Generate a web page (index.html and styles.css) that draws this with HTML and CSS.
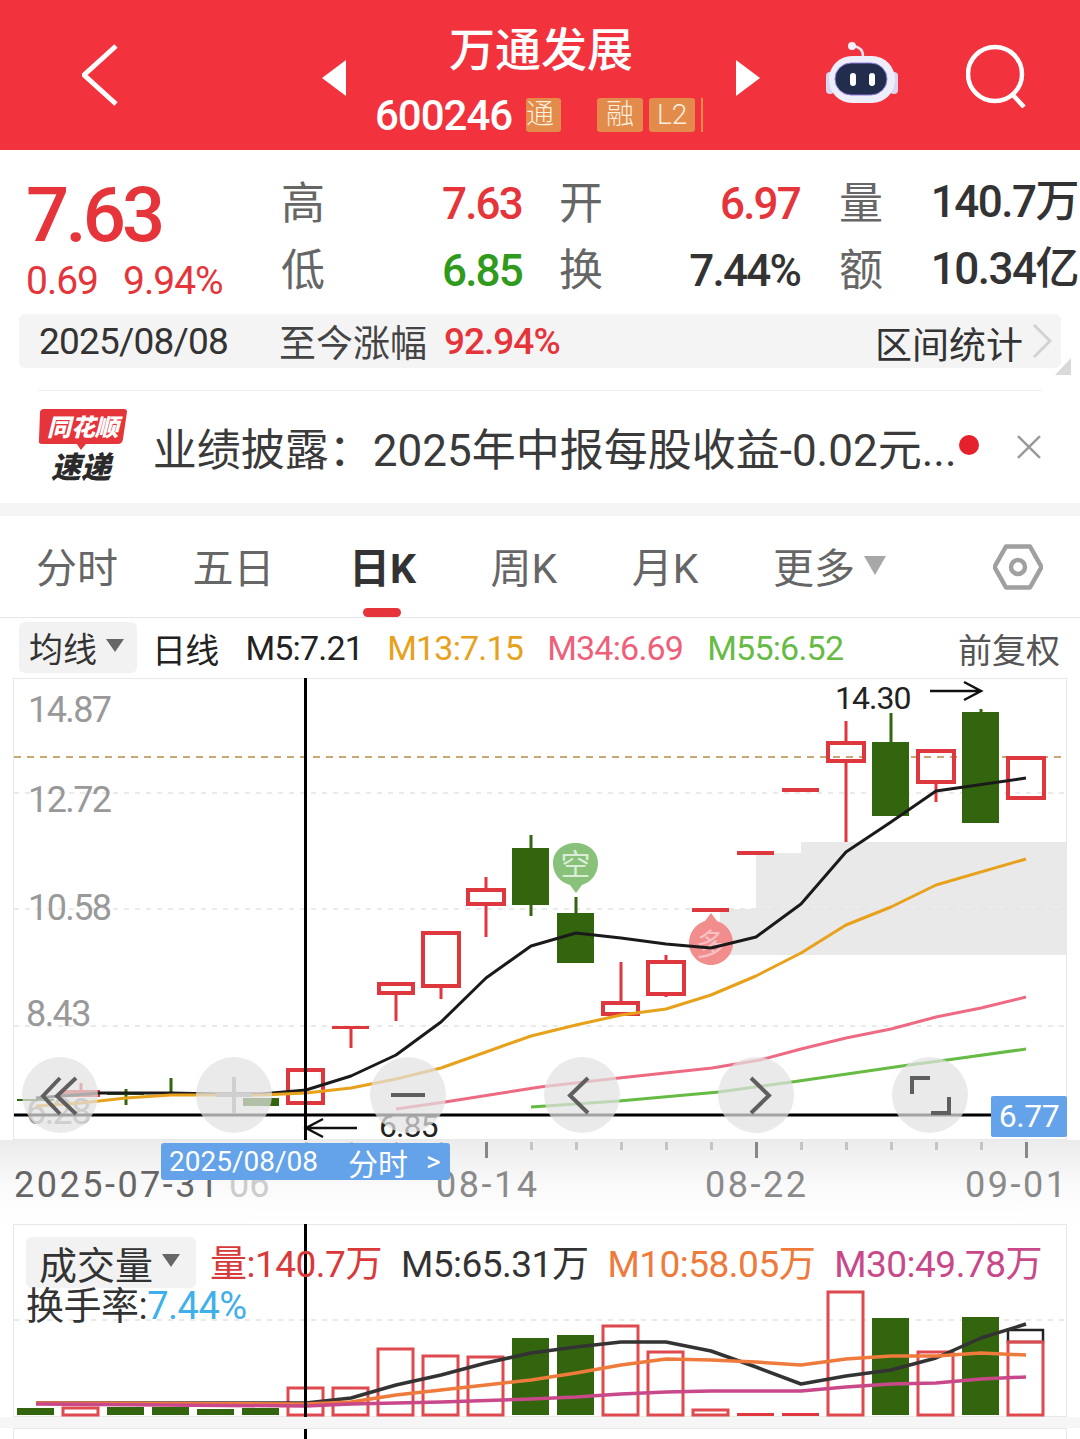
FILE: index.html
```html
<!DOCTYPE html>
<html lang="zh-CN">
<head>
  <meta charset="UTF-8">
  <title>万通发展 600246</title>
  <link rel="stylesheet" href="styles.css">
</head>
<body>
  <header class="topbar">
    <svg class="back" viewBox="0 0 36 62"><path d="M34 2 L2 31 L34 60"/></svg>
    <svg class="tri tri-left" viewBox="0 0 24 36"><path d="M24 0 V36 L0 18 Z"/></svg>
    <div class="stock">
      <div class="stock-name">万通发展</div>
      <div class="stock-sub">
        <span class="stock-code">600246</span>
        <span class="tag tag-cut">通</span>
        <span class="tag tag-rong">融</span>
        <span class="tag">L2</span>
        <span class="tag-sliver"></span>
      </div>
    </div>
    <svg class="tri" viewBox="0 0 24 36"><path d="M0 0 V36 L24 18 Z"/></svg>
    <svg class="robot" viewBox="0 0 72 64">
      <path d="M37 15 C37 9 33 6 28 5" fill="none" stroke="#e6e4f8" stroke-width="2.5"/>
      <circle cx="26" cy="5" r="4" fill="#f1f0fb"/>
      <rect x="0" y="31" width="8" height="22" rx="4" fill="#d9d6f2"/>
      <rect x="64" y="31" width="8" height="22" rx="4" fill="#d9d6f2"/>
      <rect x="3" y="15" width="66" height="47" rx="23" fill="#eeedfa"/>
      <rect x="9" y="22" width="52" height="32" rx="16" fill="#222c4c" stroke="#8d7fe0" stroke-width="1"/>
      <rect x="24" y="32" width="6" height="13" rx="3" fill="#fff"/>
      <rect x="43" y="32" width="6" height="13" rx="3" fill="#fff"/>
    </svg>
    <svg class="search" viewBox="0 0 60 64"><circle cx="29" cy="30" r="27"/><path d="M46 50 L58 63"/></svg>
  </header>

  <section class="quote">
    <div class="quote-main">
      <div class="price">7.63</div>
      <div class="change"><span>0.69</span><span>9.94%</span></div>
    </div>
    <div class="stats">
      <div class="stat-col">
        <span class="stat-label">高</span><span class="stat-val red">7.63</span>
        <span class="stat-label">低</span><span class="stat-val green">6.85</span>
      </div>
      <div class="stat-col">
        <span class="stat-label">开</span><span class="stat-val red">6.97</span>
        <span class="stat-label">换</span><span class="stat-val">7.44%</span>
      </div>
      <div class="stat-col stat-col-last">
        <span class="stat-label">量</span><span class="stat-val">140.7万</span>
        <span class="stat-label">额</span><span class="stat-val">10.34亿</span>
      </div>
    </div>
  </section>

  <div class="range-bar">
    <span class="range-date">2025/08/08</span>
    <span class="range-label">至今涨幅</span>
    <span class="range-pct">92.94%</span>
    <span class="range-link">区间统计</span>
    <svg class="range-arrow" viewBox="0 0 20 36"><path d="M2 2 L18 18 L2 34"/></svg>
    <span class="range-corner"></span>
  </div>

  <div class="news">
    <svg class="news-logo" viewBox="0 0 90 78">
      <path d="M6 1 H86 Q90 1 89 5 L85 32 Q84 36 80 36 H48 L43 42 L39 36 H4 Q0 36 1 32 L2 5 Q2 1 6 1 Z" fill="#e5343a"/>
      <text class="logo-top" x="45" y="28" text-anchor="middle">同花顺</text>
      <text class="logo-bottom" x="43" y="70" text-anchor="middle">速递</text>
    </svg>
    <div class="news-text">业绩披露：2025年中报每股收益-0.02元...</div>
    <span class="news-dot"></span>
    <svg class="news-close" viewBox="0 0 26 26"><path d="M2 2 L24 24 M24 2 L2 24"/></svg>
  </div>

  <div class="band"></div>

  <nav class="tabs">
    <span class="tab">分时</span>
    <span class="tab">五日</span>
    <span class="tab tab-on">日K</span>
    <span class="tab">周K</span>
    <span class="tab">月K</span>
    <span class="tab">更多<i class="tab-caret"></i></span>
    <svg class="gear" viewBox="0 0 50 46"><path d="M1.5 23 L13 2.500 H37 L48.500 23 L37 43.500 H13 Z"/><circle cx="25" cy="23" r="7"/></svg>
  </nav>

  <div class="legend">
    <span class="legend-btn">均线<i class="caret"></i></span>
    <span class="legend-item">日线</span>
    <span class="legend-item legend-m5">M5:7.21</span>
    <span class="legend-item legend-m13">M13:7.15</span>
    <span class="legend-item legend-m34">M34:6.69</span>
    <span class="legend-item legend-m55">M55:6.52</span>
    <span class="legend-right">前复权</span>
  </div>

  <div class="kline">
    <svg class="kline-svg" viewBox="0 678 1080 462">
      <polygon class="zone" points="1066,842 801,842 801,853 756,853 756,909 720,909 720,955 1066,955"/>
      <line class="grid" x1="14" y1="793" x2="1064" y2="793"/>
      <line class="grid" x1="14" y1="909" x2="1064" y2="909"/>
      <line class="grid" x1="14" y1="1026" x2="1064" y2="1026"/>
      <line class="last-close" x1="14" y1="757" x2="1064" y2="757"/>
      <rect class="frame" x="13.500" y="678.500" width="1053" height="461"/>

      <text class="axis-label" x="28" y="722">14.87</text>
      <text class="axis-label" x="28" y="812">12.72</text>
      <text class="axis-label" x="28" y="920">10.58</text>
      <text class="axis-label" x="26" y="1026">8.43</text>
      <text class="axis-label" x="26" y="1124">6.28</text>

      <!-- 绿K -->
      <rect class="dn" x="17" y="1099" width="37" height="2"/>
      <rect class="dn" x="107" y="1093" width="37" height="2"/>
      <line class="dn-w" x1="126" y1="1089" x2="126" y2="1105"/>
      <rect class="dn" x="152" y="1092" width="37" height="2"/>
      <line class="dn-w" x1="171" y1="1078" x2="171" y2="1093"/>
      <rect class="dn" x="197" y="1094" width="37" height="2"/>
      <rect class="dn" x="243" y="1098" width="36" height="8"/>
      <rect class="dn" x="512" y="848" width="37" height="57"/>
      <line class="dn-w" x1="531" y1="835" x2="531" y2="916"/>
      <rect class="dn" x="557" y="913" width="37" height="50"/>
      <line class="dn-w" x1="576" y1="897" x2="576" y2="913"/>
      <rect class="dn" x="872" y="742" width="37" height="74"/>
      <line class="dn-w" x1="891" y1="713" x2="891" y2="742"/>
      <rect class="dn" x="962" y="712" width="37" height="111"/>
      <line class="dn-w" x1="981" y1="709" x2="981" y2="712"/>

      <!-- 红K -->
      <line class="up-w" x1="81" y1="1083" x2="81" y2="1092"/>
      <rect class="up" x="64" y="1092" width="34" height="3"/>
      <rect class="up" x="288" y="1070" width="35" height="33"/>
      <rect class="up-f" x="332" y="1026" width="37" height="3"/>
      <line class="up-w" x1="351" y1="1028" x2="351" y2="1048"/>
      <rect class="up" x="379" y="984" width="34" height="9"/>
      <line class="up-w" x1="396" y1="994" x2="396" y2="1021"/>
      <rect class="up" x="423" y="933" width="36" height="53"/>
      <line class="up-w" x1="441" y1="986" x2="441" y2="999"/>
      <rect class="up" x="468" y="890" width="36" height="14"/>
      <line class="up-w" x1="486" y1="877" x2="486" y2="890"/>
      <line class="up-w" x1="486" y1="904" x2="486" y2="937"/>
      <rect class="up" x="603" y="1003" width="35" height="11"/>
      <line class="up-w" x1="621" y1="962" x2="621" y2="1003"/>
      <rect class="up" x="648" y="962" width="36" height="32"/>
      <line class="up-w" x1="666" y1="955" x2="666" y2="962"/>
      <line class="up-w" x1="666" y1="994" x2="666" y2="997"/>
      <rect class="up-f" x="692" y="908" width="37" height="4"/>
      <rect class="up-f" x="737" y="851" width="37" height="4"/>
      <rect class="up-f" x="782" y="788" width="37" height="4"/>
      <rect class="up" x="828" y="743" width="36" height="18"/>
      <line class="up-w" x1="846" y1="721" x2="846" y2="743"/>
      <line class="up-w" x1="846" y1="761" x2="846" y2="842"/>
      <rect class="up" x="918" y="751" width="36" height="31"/>
      <line class="up-w" x1="936" y1="782" x2="936" y2="802"/>
      <rect class="up" x="1008" y="758" width="36" height="40"/>

      <g class="signal">
        <path d="M576 893 L570 885 C559 882 553 873 553 863 C553 851 563 843 575.500 843 C588 843 598 851 598 863 C598 873 592 882 582 885 Z" fill="#88c27a"/>
        <text class="signal-text" x="575.500" y="875" text-anchor="middle">空</text>
      </g>
      <g class="signal">
        <path d="M711 913 L705 921 C695 924 689 933 689 943 C689 955 699 965 711 965 C723 965 733 955 733 943 C733 933 727 924 717 921 Z" fill="#f28d8e"/>
        <text class="signal-text signal-faint" x="711" y="955" text-anchor="middle">多</text>
      </g>

      <polyline class="ma ma5" points="36,1098 100,1093 171,1093 216,1094 261,1094 306,1090 351,1076 396,1055 441,1022 486,978 531,946 576,933 621,938 666,944 711,948 756,937 801,904 846,852 891,822 936,791 1026,778"/>
      <polyline class="ma ma13" points="36,1106 81,1103 126,1098 171,1095 216,1095 261,1095 306,1093 351,1088 396,1079 441,1068 486,1052 531,1036 576,1025 621,1015 666,1009 711,995 756,976 801,953 846,925 891,907 936,885 1026,859"/>
      <polyline class="ma ma34" points="396,1109 445,1102 540,1087 619,1078 712,1068 760,1060 801,1049 846,1038 891,1029 936,1017 981,1008 1026,997"/>
      <polyline class="ma ma55" points="531,1107 619,1101 719,1092 792,1082 909,1065 947,1060 1026,1049"/>

      <text class="mark-text" x="835" y="709">14.30</text>
      <path class="mark-arrow" d="M930 691 H981 M964 682 L981 691 L964 700"/>
      <text class="mark-text" x="379" y="1137">6.85</text>
      <path class="mark-arrow" d="M357 1128 H306 M323 1119 L306 1128 L323 1137"/>

      <rect class="cross" x="14" y="1113.500" width="977" height="3"/>
      <rect class="cross" x="304" y="678" width="3" height="462"/>
    </svg>

    <div class="chart-tools">
      <span class="tool"><svg viewBox="0 0 76 76"><path d="M38 21 L21 39 L38 57 M54 21 L35 39 L54 57"/></svg></span>
      <span class="tool tool-off"><svg viewBox="0 0 76 76"><path d="M38 20 V56 M20 38 H56"/></svg></span>
      <span class="tool"><svg viewBox="0 0 76 76"><path d="M21 38 H55"/></svg></span>
      <span class="tool"><svg viewBox="0 0 76 76"><path d="M44 21 L26 38.500 L44 56"/></svg></span>
      <span class="tool"><svg viewBox="0 0 76 76"><path d="M33 21 L51 38.500 L33 56"/></svg></span>
      <span class="tool"><svg viewBox="0 0 76 76"><path d="M20 37 V21 H38 M57 40 V56 H39"/></svg></span>
    </div>
    <span class="price-tag">6.77</span>
  </div>

  <div class="axis">
    <div class="ticks">
      <i class="tick"></i><i class="tick"></i><i class="tick"></i><i class="tick"></i><i class="tick tick-long"></i>
      <i class="tick"></i><i class="tick"></i><i class="tick"></i><i class="tick"></i><i class="tick"></i><i class="tick tick-long"></i>
      <i class="tick"></i><i class="tick"></i><i class="tick"></i><i class="tick"></i><i class="tick"></i><i class="tick tick-long"></i>
    </div>
    <div class="dates">
      <span class="date-first">2025-07-31</span>
      <span class="date-fade">06</span>
      <span class="date-a">08-14</span>
      <span class="date-b">08-22</span>
      <span class="date-c">09-01</span>
    </div>
    <div class="date-flag"><span>2025/08/08</span><span class="flag-cn">分时</span><span class="flag-go">&gt;</span></div>
  </div>

  <div class="volume">
    <svg class="volume-svg" viewBox="0 1224 1080 204">
      <rect class="frame" x="13.500" y="1224.500" width="1053" height="192"/>
      <line class="grid" x1="14" y1="1320" x2="1064" y2="1320"/>
      <rect class="dn" x="17" y="1408" width="37" height="7"/>
      <rect class="vol-up" x="63" y="1408" width="35" height="7"/>
      <rect class="dn" x="107" y="1407" width="37" height="8"/>
      <rect class="dn" x="152" y="1407" width="37" height="8"/>
      <rect class="dn" x="197" y="1409" width="37" height="6"/>
      <rect class="dn" x="242" y="1408" width="37" height="7"/>
      <rect class="vol-up" x="288" y="1388" width="35" height="27"/>
      <rect class="vol-up" x="333" y="1388" width="35" height="27"/>
      <rect class="vol-up" x="378" y="1349" width="35" height="66"/>
      <rect class="vol-up" x="423" y="1356" width="35" height="59"/>
      <rect class="vol-up" x="468" y="1357" width="35" height="58"/>
      <rect class="dn" x="512" y="1338" width="37" height="77"/>
      <rect class="dn" x="557" y="1335" width="37" height="80"/>
      <rect class="vol-up" x="603" y="1326" width="35" height="89"/>
      <rect class="vol-up" x="648" y="1352" width="35" height="63"/>
      <rect class="vol-up" x="693" y="1410" width="35" height="5"/>
      <rect class="up-f" x="737" y="1413" width="37" height="3"/>
      <rect class="up-f" x="782" y="1413" width="37" height="3"/>
      <rect class="vol-up" x="828" y="1292" width="35" height="123"/>
      <rect class="dn" x="872" y="1318" width="37" height="97"/>
      <rect class="vol-up" x="918" y="1352" width="35" height="63"/>
      <rect class="dn" x="962" y="1317" width="37" height="98"/>
      <rect class="vol-now" x="1008" y="1330" width="35" height="12"/>
      <rect class="vol-up" x="1008" y="1342" width="35" height="73"/>
      <polyline class="vma vma5" points="36,1403 306,1403 351,1398 396,1385 441,1375 486,1363 531,1353 576,1347 621,1342 666,1342 711,1351 756,1367 801,1384 846,1376 891,1370 936,1358 981,1338 1026,1324"/>
      <polyline class="vma vma10" points="36,1403 306,1404 351,1402 396,1395 441,1390 486,1385 531,1380 576,1373 621,1365 666,1359 711,1360 756,1362 801,1365 846,1359 891,1356 936,1356 981,1353 1026,1355"/>
      <polyline class="vma vma30" points="36,1404 306,1406 351,1404 441,1402 531,1399 576,1397 621,1394 666,1392 711,1391 801,1391 846,1387 891,1384 936,1383 981,1379 1026,1377"/>
      <rect class="band-foot" x="0" y="1417" width="1080" height="11"/>
      <rect class="cross" x="304" y="1224" width="3" height="193"/>
    </svg>
    <div class="vol-legend">
      <div class="vol-row">
        <span class="legend-btn vol-btn">成交量<i class="caret"></i></span>
        <span class="vol-item vol-red">量:140.7万</span>
        <span class="vol-item vol-m5">M5:65.31万</span>
        <span class="vol-item vol-m10">M10:58.05万</span>
        <span class="vol-item vol-m30">M30:49.78万</span>
      </div>
      <div class="vol-rate">换手率:<span class="vol-blue">7.44%</span></div>
    </div>
  </div>

  <div class="next-panel"><span class="next-cross"></span></div>
</body>
</html>
```
FILE: styles.css
```css
* {
  box-sizing: border-box;
}
html, body {
  margin: 0;
  padding: 0;
}
body {
  width: 1080px;
  height: 1439px;
  overflow: hidden;
  background: #fff;
  font-family: Roboto, "Noto Sans CJK SC", sans-serif;
  color: #333;
}
i {
  font-style: normal;
}

/* 顶部栏 */
.topbar {
  height: 150px;
  background: #f2323c;
  display: flex;
  align-items: center;
  padding-left: 82px;
  color: #fff;
}
.back {
  width: 36px;
  height: 62px;
  fill: none;
  stroke: #fff;
  stroke-width: 5;
}
.tri {
  width: 24px;
  height: 36px;
  margin-top: 6px;
  fill: #fff;
}
.tri-left {
  margin-left: 204px;
}
.stock {
  width: 390px;
  align-self: flex-start;
  text-align: center;
}
.stock-name {
  font-size: 46px;
  line-height: 56px;
  font-weight: 500;
  margin-top: 22px;
}
.stock-sub {
  display: flex;
  align-items: center;
  height: 36px;
  margin-top: 19px;
  padding-left: 29px;
}
.stock-code {
  font-size: 42px;
  font-weight: 500;
  letter-spacing: -1px;
  width: 151px;
  text-align: left;
}
.tag {
  height: 34px;
  line-height: 33px;
  padding: 0 8px;
  background: #e28b4a;
  border-radius: 3px;
  font-size: 28px;
  margin-left: 6px;
  color: #fdeedd;
  font-weight: 300;
}
.tag-cut {
  margin-left: 0;
  padding: 0;
  width: 35px;
  text-align: left;
}
.tag-rong {
  margin-left: 36px;
  width: 46px;
  padding: 0 9px;
}
.tag-sliver {
  width: 2px;
  height: 34px;
  background: #e28b4a;
  margin-left: 6px;
}
.robot {
  width: 72px;
  height: 64px;
  margin: -4px 0 0 66px;
}
.search {
  width: 60px;
  height: 64px;
  margin: 2px 0 0 68px;
  fill: none;
  stroke: #fff;
  stroke-width: 4.5;
}

/* 行情 */
.quote {
  height: 164px;
  display: flex;
  padding-left: 26px;
}
.quote-main {
  width: 255px;
}
.price {
  font-size: 76px;
  line-height: 76px;
  margin-top: 27px;
  font-weight: 500;
  color: #e5343a;
  letter-spacing: -3.8px;
}
.change {
  display: flex;
  gap: 25px;
  font-size: 39px;
  line-height: 46px;
  margin-top: 5px;
  color: #e5343a;
  letter-spacing: -1px;
}
.stats {
  display: flex;
  gap: 37px;
  margin-top: 20px;
}
.stat-col {
  display: grid;
  grid-template-columns: 44px 197px;
  grid-auto-rows: 67px;
  align-items: center;
}
.stat-label {
  font-size: 44px;
  color: #666;
  margin-top: -8px;
}
.stat-val {
  font-size: 44px;
  line-height: 44px;
  font-weight: 500;
  text-align: right;
  color: #333;
  letter-spacing: -1.8px;
  white-space: nowrap;
}
.stat-col-last .stat-label {
  margin-left: 2px;
}
.stat-col-last .stat-val {
  letter-spacing: -1.5px;
  margin-top: -4px;
}
.stat-val.red {
  color: #e5343a;
}
.stat-val.green {
  color: #2f9a1c;
}

/* 区间 */
.range-bar {
  position: relative;
  margin-left: 19px;
  width: 1042px;
  height: 54px;
  background: #f4f4f4;
  border-radius: 6px;
  display: flex;
  align-items: center;
  padding-left: 20px;
}
.range-date {
  font-size: 37px;
  width: 240px;
  letter-spacing: -0.8px;
}
.range-label {
  font-size: 37px;
  width: 165px;
  color: #444;
}
.range-pct {
  font-size: 37px;
  font-weight: 500;
  color: #e5343a;
  letter-spacing: -1px;
}
.range-link {
  margin-left: auto;
  font-size: 37px;
  margin-top: 4px;
  color: #333;
}
.range-arrow {
  width: 20px;
  height: 36px;
  margin: 0 9px;
  fill: none;
  stroke: #d2d2d2;
  stroke-width: 3;
}
/* 角标压在条的右下角 */
.range-corner {
  position: absolute;
  right: -10px;
  bottom: -7px;
  width: 0;
  height: 0;
  border-left: 16px solid transparent;
  border-bottom: 17px solid #d9d9d9;
}

/* 速递 */
.news {
  margin: 22px 38px 0;
  height: 113px;
  border-top: 1px solid #eee;
  display: flex;
  align-items: center;
}
.news-logo {
  width: 90px;
  height: 78px;
}
.logo-top {
  font-size: 24px;
  font-weight: 900;
  font-style: italic;
  fill: #fff;
}
.logo-bottom {
  font-size: 30px;
  font-weight: 900;
  font-style: italic;
  fill: #2a2a2a;
}
.news-text {
  margin-left: 25px;
  font-size: 44px;
  color: #3a3a3a;
  white-space: nowrap;
  width: 806px;
}
.news-dot {
  width: 20px;
  height: 20px;
  border-radius: 50%;
  background: #e5222c;
  margin: -4px 0 0 2px;
}
.news-close {
  width: 26px;
  height: 26px;
  margin-left: 37px;
  stroke: #9a9a9a;
  stroke-width: 2.500;
  fill: none;
}
.band {
  height: 13px;
  background: #f5f5f5;
}

/* 周期 */
.tabs {
  position: relative;
  height: 102px;
  border-bottom: 1px solid #e6e6e6;
  display: flex;
  align-items: center;
  gap: 74.500px;
  padding-left: 36px;
}
.tab {
  position: relative;
  font-size: 41px;
  color: #666;
  display: flex;
  align-items: center;
  margin-top: -4px;
}
.tab-on {
  font-weight: 700;
  color: #333;
}
.tab-on::after {
  content: "";
  position: absolute;
  left: 14px;
  bottom: -22px;
  width: 38px;
  height: 9px;
  border-radius: 5px;
  background: #e5343a;
}
.tab-caret {
  width: 0;
  height: 0;
  margin: 2px 0 0 9px;
  border-left: 11.500px solid transparent;
  border-right: 11.500px solid transparent;
  border-top: 19px solid #a8a8a8;
}
.gear {
  position: absolute;
  left: 993px;
  top: 28px;
  width: 50px;
  height: 46px;
  fill: none;
  stroke: #a0a0a0;
  stroke-width: 4.500;
  stroke-linejoin: round;
}

/* 均线 */
.legend {
  height: 60px;
  display: flex;
  align-items: center;
  padding-left: 19px;
  font-size: 34px;
}
.legend-btn {
  width: 118px;
  height: 51px;
  background: #f2f2f2;
  border-radius: 6px;
  display: flex;
  align-items: center;
  padding-left: 10px;
  font-size: 34px;
  color: #333;
  margin-top: -2px;
}
.caret {
  width: 0;
  height: 0;
  margin: -4px 0 0 9px;
  border-left: 9px solid transparent;
  border-right: 9px solid transparent;
  border-top: 13px solid #666;
}
.legend-item {
  margin-left: 24px;
  letter-spacing: -0.8px;
  white-space: nowrap;
  color: #222;
}
.legend-btn + .legend-item {
  margin-left: 15px;
}
.legend-item.legend-m5 {
  margin-left: 27px;
}
.legend-m13 {
  color: #e7a11b;
}
.legend-m34 {
  color: #ee5f7a;
}
.legend-m55 {
  color: #66bb44;
}
.legend-right {
  margin-left: auto;
  margin-right: 20px;
  color: #555;
}

/* K线 */
.kline {
  position: relative;
  height: 462px;
}
.kline-svg, .volume-svg {
  display: block;
  width: 1080px;
  height: 100%;
}
.frame {
  fill: none;
  stroke: #e8e8e8;
}
.zone {
  fill: #e9e9e9;
}
.grid {
  stroke: #e3e3e3;
  stroke-width: 1.500;
  stroke-dasharray: 5 6;
}
.last-close {
  stroke: #c9a874;
  stroke-width: 2;
  stroke-dasharray: 7 6;
}
.axis-label {
  font-size: 36px;
  fill: #999;
  letter-spacing: -1.6px;
}
.dn {
  fill: #33650f;
}
.dn-w {
  stroke: #33650f;
  stroke-width: 3;
}
.up {
  fill: none;
  stroke: #de373d;
  stroke-width: 4;
}
.up-f {
  fill: #de373d;
}
.up-w {
  stroke: #de373d;
  stroke-width: 3;
}
.ma {
  fill: none;
  stroke-width: 3;
  stroke-linejoin: round;
}
.ma5 {
  stroke: #1a1a1a;
}
.ma13 {
  stroke: #e7a11b;
}
.ma34 {
  stroke: #ee6a82;
}
.ma55 {
  stroke: #66bb44;
}
.signal-text {
  font-size: 30px;
  fill: #fff;
  opacity: 0.7;
}
.signal-faint {
  opacity: 0.45;
}
.mark-text {
  font-size: 32px;
  fill: #222;
  letter-spacing: -1px;
}
.mark-arrow {
  fill: none;
  stroke: #111;
  stroke-width: 2.500;
}
.cross {
  fill: #000;
}

/* 浮在图上的按钮 */
.chart-tools {
  position: absolute;
  left: 22px;
  top: 379px;
  display: flex;
  gap: 98px;
}
.tool {
  width: 76px;
  height: 76px;
  border-radius: 50%;
  background: rgba(226, 226, 226, 0.72);
}
.tool svg {
  display: block;
  width: 76px;
  height: 76px;
  fill: none;
  stroke: #5f5f5f;
  stroke-width: 4;
}
.tool-off svg {
  stroke: #cfcfcf;
}
.price-tag {
  position: absolute;
  left: 991px;
  top: 418px;
  width: 76px;
  height: 41px;
  line-height: 41px;
  text-align: center;
  background: #64a3ea;
  border-radius: 2px;
  color: #fff;
  font-size: 32px;
  letter-spacing: -0.5px;
}

/* 日期轴 */
.axis {
  position: relative;
  height: 84px;
  background: linear-gradient(#ececec, #fafafa 55%, #fff);
}
.ticks {
  display: flex;
  gap: 42px;
  padding: 2px 0 0 305px;
  height: 20px;
  align-items: flex-start;
}
.tick {
  width: 3px;
  height: 8px;
  background: #c4c4c4;
}
.tick-long {
  height: 16px;
  background: #888;
}
.dates {
  display: flex;
  font-size: 36px;
  line-height: 42px;
  margin-top: 4px;
  color: #8a8a8a;
  letter-spacing: 2.500px;
  padding-left: 14px;
  white-space: nowrap;
}
.date-first {
  width: 215px;
  color: #666;
}
.date-fade {
  width: 207px;
  color: #ccc;
  letter-spacing: 0;
}
.date-a {
  width: 269px;
}
.date-b {
  width: 260px;
}
.date-flag {
  position: absolute;
  left: 161px;
  top: 3px;
  width: 289px;
  height: 37px;
  display: flex;
  align-items: center;
  padding-left: 8px;
  background: #64a3ea;
  border-radius: 3px;
  color: #fff;
  font-size: 28px;
  white-space: nowrap;
}
.flag-cn {
  font-size: 30px;
  margin-left: 30px;
}
.flag-go {
  margin-left: 18px;
}

/* 成交量 */
.volume {
  position: relative;
  height: 204px;
}
.vol-up {
  fill: none;
  stroke: #de4a4e;
  stroke-width: 3;
}
.vol-now {
  fill: none;
  stroke: #222;
  stroke-width: 2.500;
}
.vma {
  fill: none;
  stroke-width: 3.500;
  stroke-linejoin: round;
}
.vma5 {
  stroke: #333;
}
.vma10 {
  stroke: #ee7a3c;
}
.vma30 {
  stroke: #c8488a;
}
.band-foot {
  fill: #f6f6f6;
}
.vol-legend {
  position: absolute;
  left: 26px;
  top: 13px;
}
.vol-row {
  display: flex;
  align-items: center;
  font-size: 37px;
  white-space: nowrap;
  letter-spacing: -0.5px;
}
.vol-btn {
  width: 170px;
  font-size: 38px;
  padding-left: 13px;
  margin: 0;
  letter-spacing: 0;
}
.vol-item {
  margin-left: 19px;
  margin-top: -4px;
}
.vol-btn + .vol-item {
  margin-left: 14px;
}
.vol-red {
  color: #d83a3a;
}
.vol-m5 {
  color: #333;
}
.vol-m10 {
  color: #ee7a3c;
}
.vol-m30 {
  color: #c8488a;
}
.vol-rate {
  font-size: 38px;
  line-height: 42px;
  margin-top: -3px;
  color: #333;
  letter-spacing: -0.5px;
}
.vol-blue {
  color: #3fb0ea;
  font-size: 38px;
  letter-spacing: -0.5px;
}
.next-panel {
  position: relative;
  height: 11px;
  margin: 0 13px;
  border: 1px solid #e8e8e8;
  border-bottom: 0;
}
.next-cross {
  position: absolute;
  left: 290px;
  top: 0;
  width: 3px;
  height: 11px;
  background: #000;
}
```
